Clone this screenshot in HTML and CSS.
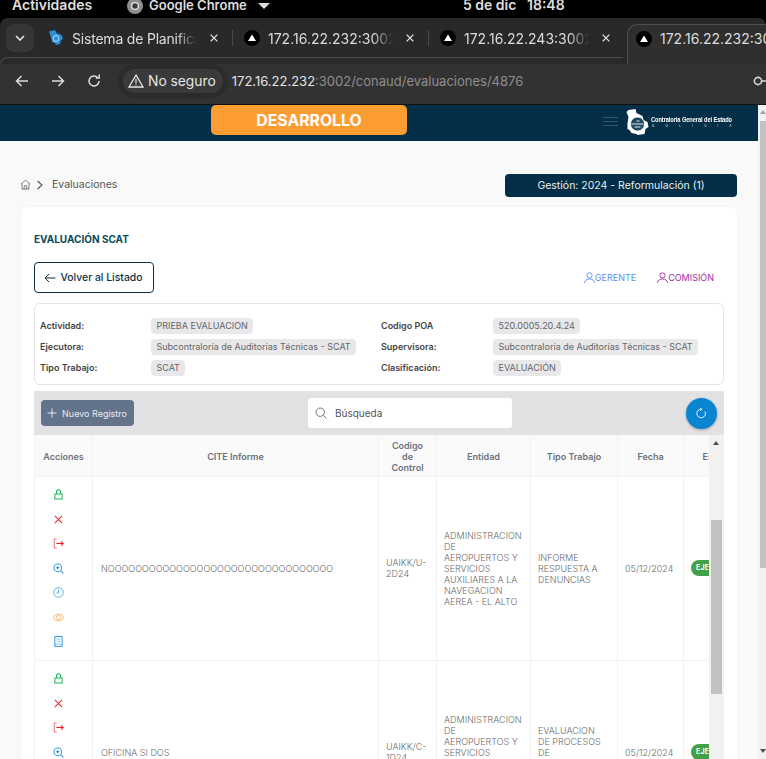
FILE: index.html
```html
<!DOCTYPE html>
<html lang="es">
<head>
    <meta charset="UTF-8">
    <meta name="viewport" content="width=device-width, initial-scale=1.0">
    <title>Evaluaciones</title>
    <link rel="stylesheet" href="styles.css">
</head>
<body>

<svg class="sprites" width="0" height="0">
    <symbol id="i-triangle" viewBox="0 0 16 16"><circle cx="8" cy="8" r="8" fill="#000"/><path d="M8 4.4l4 6.6H4z" fill="#fff"/></symbol>
    <symbol id="i-close" viewBox="0 0 12 12"><path d="M2 2l8 8M10 2l-8 8" stroke="#e6e6e6" stroke-width="1.5" fill="none"/></symbol>
    <symbol id="i-lock" viewBox="0 0 12 12"><path d="M2 5.400h8v5.600H2zM3.800 5.400V3a2.200 2.200 0 0 1 4.400 0v2.400" fill="none" stroke="#22b35e" stroke-width="1.100"/></symbol>
    <symbol id="i-x" viewBox="0 0 12 12"><path d="M2 2l8 8M10 2l-8 8" fill="none" stroke="#e5343b" stroke-width="1.200"/></symbol>
    <symbol id="i-exit" viewBox="0 0 12 12"><path d="M4 1.200H1.400v9.600H4" fill="none" stroke="#f07a7e" stroke-width="1.100"/><path d="M3.600 6h7.600M8.800 3.800L11.200 6 8.800 8.200" fill="none" stroke="#e5202a" stroke-width="1.100"/></symbol>
    <symbol id="i-zoom" viewBox="0 0 12 12"><circle cx="5.200" cy="5.200" r="4.200" fill="none" stroke="#2b9be6" stroke-width="1.100"/><path d="M8.300 8.300L11.400 11.400" stroke="#2b9be6" stroke-width="1.200"/><path d="M3.400 5.200h3.600M5.200 3.400V7" stroke="#1c78bc" stroke-width="1"/></symbol>
    <symbol id="i-clock" viewBox="0 0 12 12"><circle cx="6" cy="6" r="5.200" fill="none" stroke="#4aa8e6" stroke-width="1"/><path d="M6 3v3.400H3.800" fill="none" stroke="#4aa8e6" stroke-width="1"/></symbol>
    <symbol id="i-eye" viewBox="0 0 12 12"><ellipse cx="6" cy="6" rx="5.200" ry="3.800" fill="none" stroke="#fbb566" stroke-width="1"/><circle cx="6" cy="6" r="2.400" fill="none" stroke="#fbb566" stroke-width="1"/></symbol>
    <symbol id="i-book" viewBox="0 0 12 12"><path d="M2 .6h8v10.800H2z" fill="none" stroke="#1c8ad6" stroke-width="1"/><path d="M4 3.400h4M4 5.800h4M2 8.800h8" fill="none" stroke="#5aaae2" stroke-width=".8"/></symbol>
</svg>

<div class="os-bar">
    <span class="os-left">Actividades</span>
    <span class="os-app">
        <svg width="16" height="16" viewBox="0 0 16 16"><circle cx="8" cy="8" r="8" fill="#8f8f8f"/><circle cx="8" cy="8" r="3.400" fill="#3a3a3a" stroke="#e4e4e4" stroke-width="1.400"/></svg>
        Google Chrome
        <i class="os-caret"></i>
    </span>
    <span class="os-clock">5 de dic&nbsp;&nbsp;&nbsp;18:48</span>
</div>

<div class="tab-strip">
    <div class="tab-menu">
        <svg width="10" height="6" viewBox="0 0 10 6"><path d="M1 1l4 4 4-4" fill="none" stroke="#e6e6e6" stroke-width="1.600"/></svg>
    </div>
    <div class="tab">
        <svg class="tab-icon" viewBox="0 0 16 16"><path d="M1 1.500l6-1.500 1.500 3 5 2 1.500 3.500-2 2-1 3.500-4 1-1-2-3-1-1-5z" fill="#2b8fd6"/><circle cx="8" cy="8.500" r="3" fill="none" stroke="#bfe0f5"/></svg>
        <span class="tab-title tab-title-tight">Sistema de Planificación</span>
        <svg class="tab-close" viewBox="0 0 12 12"><use href="#i-close"/></svg>
    </div>
    <div class="tab tab-sep">
        <svg class="tab-icon"><use href="#i-triangle"/></svg>
        <span class="tab-title">172.16.22.232:3002</span>
        <svg class="tab-close" viewBox="0 0 12 12"><use href="#i-close"/></svg>
    </div>
    <div class="tab tab-sep">
        <svg class="tab-icon"><use href="#i-triangle"/></svg>
        <span class="tab-title">172.16.22.243:3002</span>
        <svg class="tab-close" viewBox="0 0 12 12"><use href="#i-close"/></svg>
    </div>
    <div class="tab tab-active">
        <svg class="tab-icon"><use href="#i-triangle"/></svg>
        <span class="tab-title">172.16.22.232:3002</span>
    </div>
</div>

<div class="chrome-bar">
    <svg class="nav-icon" viewBox="0 0 16 16"><path d="M14 8H2.500M7.500 3L2.500 8l5 5" fill="none" stroke="#dcdcdc" stroke-width="1.500"/></svg>
    <svg class="nav-icon" viewBox="0 0 16 16"><path d="M2 8h11.500M8.500 3l5 5-5 5" fill="none" stroke="#dcdcdc" stroke-width="1.500"/></svg>
    <svg class="nav-icon" viewBox="0 0 16 16"><path d="M13 8a5 5 0 1 1-1.600-3.700M13.200 1.600v3.400H9.800" fill="none" stroke="#dcdcdc" stroke-width="1.500"/></svg>
    <div class="omnibox">
        <div class="security">
            <svg width="16" height="14" viewBox="0 0 16 14"><path d="M8 1.200L15 13H1z" fill="none" stroke="#e6e6e6" stroke-width="1.300"/><path d="M8 5v4.400M8 10.400v1.200" stroke="#e6e6e6" stroke-width="1.200"/></svg>
            No seguro
        </div>
        <span class="url">172.16.22.232<span class="url-dim">:3002/conaud/evaluaciones/4876</span></span>
    </div>
    <svg class="key-icon" viewBox="0 0 18 12"><circle cx="5" cy="6" r="3.600" fill="none" stroke="#d6d6d6" stroke-width="1.600"/><path d="M8.600 6H18M14 6v3M17 6v3" fill="none" stroke="#d6d6d6" stroke-width="1.600"/></svg>
</div>

<div class="viewport">
    <div class="page">
        <header class="app-header">
            <div class="env-badge">DESARROLLO</div>
            <div class="hamburger"><i></i><i></i><i></i></div>
            <div class="brand">
                <svg class="brand-mark" viewBox="0 0 24 27"><path d="M3 1l7-1 1 4 6 3 1 4 4 2 1 5-3 2-1 5-7 1-1-1-5-1-2-3-2-1 0-6 1-6-2-5z" fill="#fff"/><circle cx="12" cy="15" r="7" fill="#1d4a60" stroke="#fff" stroke-width=".8"/><path d="M6 15h12M9 18h6M11 12h3" stroke="#dfe8ec"/></svg>
                <div class="brand-text">
                    <span class="brand-name">Contraloria General del Estado</span>
                    <span class="brand-country">BOLIVIA</span>
                </div>
            </div>
        </header>

        <main class="content">
            <div class="crumb-row">
                <div class="crumbs">
                    <svg width="11" height="11" viewBox="0 0 12 12"><path d="M1 5.600L6 1.400l5 4.200M2.200 5v6h7.600V5M4.600 11V7.400h2.800V11" fill="none" stroke="#666" stroke-width=".9"/></svg>
                    <svg width="8" height="10" viewBox="0 0 8 10"><path d="M1.600 1l4.400 4-4.400 4" fill="none" stroke="#555" stroke-width="1.100"/></svg>
                    <span>Evaluaciones</span>
                </div>
                <div class="gestion">Gestión: 2024 - Reformulación (1)</div>
            </div>

            <section class="card">
                <h2 class="card-title">EVALUACIÓN SCAT</h2>

                <div class="actions-row">
                    <button class="btn-back">
                        <svg width="12" height="10" viewBox="0 0 12 10"><path d="M11.500 5H1M5 1L1 5l4 4" fill="none" stroke="#0b3044" stroke-width="1"/></svg>
                        Volver al Listado
                    </button>
                    <div class="roles">
                        <span class="role role-gerente">
                            <svg width="11" height="12" viewBox="0 0 11 12"><circle cx="5.500" cy="3.400" r="2.600" fill="none" stroke="currentColor" stroke-width=".9"/><path d="M.6 11c0-2.600 2-4 4.900-4s4.900 1.400 4.900 4" fill="none" stroke="currentColor" stroke-width=".9"/></svg>GERENTE
                        </span>
                        <span class="role role-comision">
                            <svg width="11" height="12" viewBox="0 0 11 12"><circle cx="5.500" cy="3.400" r="2.600" fill="none" stroke="currentColor" stroke-width=".9"/><path d="M.6 11c0-2.600 2-4 4.900-4s4.900 1.400 4.900 4" fill="none" stroke="currentColor" stroke-width=".9"/></svg>COMISIÓN
                        </span>
                    </div>
                </div>

                <div class="info-box">
                    <span class="info-label">Actividad:</span>
                    <span><span class="chip">PRIEBA EVALUACION</span></span>
                    <span class="info-label">Codigo POA</span>
                    <span><span class="chip">520.0005.20.4.24</span></span>
                    <span class="info-label">Ejecutora:</span>
                    <span><span class="chip">Subcontraloría de Auditorías Técnicas - SCAT</span></span>
                    <span class="info-label">Supervisora:</span>
                    <span><span class="chip">Subcontraloría de Auditorías Técnicas - SCAT</span></span>
                    <span class="info-label">Tipo Trabajo:</span>
                    <span><span class="chip">SCAT</span></span>
                    <span class="info-label">Clasificación:</span>
                    <span><span class="chip">EVALUACIÓN</span></span>
                </div>

                <div class="table-tools">
                    <button class="btn-new">
                        <svg width="10" height="10" viewBox="0 0 10 10"><path d="M5 .5v9M.5 5h9" stroke="#e8ebef" stroke-width="1"/></svg>
                        Nuevo Registro
                    </button>
                    <div class="search">
                        <svg width="12" height="12" viewBox="0 0 12 12"><circle cx="5.200" cy="5.200" r="4.200" fill="none" stroke="#666" stroke-width=".9"/><path d="M8.300 8.300L11.500 11.500" stroke="#666" stroke-width=".9"/></svg>
                        <span>Búsqueda</span>
                    </div>
                    <button class="btn-refresh">
                        <svg width="11" height="11" viewBox="0 0 12 12"><path d="M9.800 3.800A4.700 4.700 0 1 1 6 1.300" fill="none" stroke="#fff" stroke-width="1"/><path d="M4.600 0L6.400 1.300 4.800 3" fill="none" stroke="#fff" stroke-width="1"/></svg>
                    </button>
                </div>

                <div class="table-wrap">
                    <div class="table-clip">
                        <table class="data-table">
                            <colgroup>
                                <col class="col-actions">
                                <col class="col-cite">
                                <col class="col-code">
                                <col class="col-entity">
                                <col class="col-type">
                                <col class="col-date">
                                <col class="col-state">
                            </colgroup>
                            <thead>
                                <tr>
                                    <th>Acciones</th>
                                    <th>CITE Informe</th>
                                    <th>Codigo de Control</th>
                                    <th>Entidad</th>
                                    <th>Tipo Trabajo</th>
                                    <th>Fecha</th>
                                    <th>Estado</th>
                                </tr>
                            </thead>
                            <tbody>
                                <tr>
                                    <td>
                                        <div class="row-actions">
                                            <svg><use href="#i-lock"/></svg>
                                            <svg><use href="#i-x"/></svg>
                                            <svg><use href="#i-exit"/></svg>
                                            <svg><use href="#i-zoom"/></svg>
                                            <svg><use href="#i-clock"/></svg>
                                            <svg><use href="#i-eye"/></svg>
                                            <svg><use href="#i-book"/></svg>
                                        </div>
                                    </td>
                                    <td>NOOOOOOOOOOOOOOOOOOOOOOOOOOOOOOOOO</td>
                                    <td>UAIKK/U-2D24</td>
                                    <td>ADMINISTRACION DE AEROPUERTOS Y SERVICIOS AUXILIARES A LA NAVEGACION AEREA - EL ALTO</td>
                                    <td>INFORME RESPUESTA A DENUNCIAS</td>
                                    <td>05/12/2024</td>
                                    <td><span class="badge">EJECUTADO</span></td>
                                </tr>
                                <tr>
                                    <td>
                                        <div class="row-actions">
                                            <svg><use href="#i-lock"/></svg>
                                            <svg><use href="#i-x"/></svg>
                                            <svg><use href="#i-exit"/></svg>
                                            <svg><use href="#i-zoom"/></svg>
                                            <svg><use href="#i-clock"/></svg>
                                            <svg><use href="#i-eye"/></svg>
                                            <svg><use href="#i-book"/></svg>
                                        </div>
                                    </td>
                                    <td>OFICINA SI DOS</td>
                                    <td>UAIKK/C-1D24</td>
                                    <td>ADMINISTRACION DE AEROPUERTOS Y SERVICIOS AUXILIARES A LA NAVEGACION AEREA - EL ALTO</td>
                                    <td>EVALUACION DE PROCESOS DE CONTRATACION ESTATAL</td>
                                    <td>05/12/2024</td>
                                    <td><span class="badge">EJECUTADO</span></td>
                                </tr>
                            </tbody>
                        </table>
                    </div>
                    <div class="table-scroll">
                        <i class="arrow-up"></i>
                        <div class="table-thumb"></div>
                    </div>
                </div>
            </section>
        </main>
    </div>
    <div class="page-scroll">
        <i class="page-arrow"></i>
        <div class="page-thumb"></div>
        <i class="page-arrow-down"></i>
    </div>
</div>

</body>
</html>
```

FILE: styles.css
```css
* {
    box-sizing: border-box;
}
html, body {
    height: 759px;
    overflow: hidden;
}
body {
    margin: 0;
    font-family: Inter, "Liberation Sans", sans-serif;
    background: #000;
    display: flex;
    flex-direction: column;
}
button {
    font-family: inherit;
}
.sprites {
    position: absolute;
}

/* desktop bar */
.os-bar {
    height: 18px;
    flex: none;
    overflow: hidden;
    background: #000;
    color: #dedede;
    font-size: 14px;
    font-weight: 600;
    line-height: 9px;
    display: flex;
    align-items: flex-start;
    padding-left: 12px;
}
.os-left {
    width: 115px;
}
.os-app {
    display: flex;
    align-items: center;
    gap: 6px;
    width: 336px;
    height: 9px;
    margin-top: 1px;
    font-size: 13px;
}
.os-caret {
    width: 0;
    height: 0;
    border-left: 6.500px solid transparent;
    border-right: 6.500px solid transparent;
    border-top: 6px solid #dedede;
    margin-left: 5px;
}
.os-clock {
    white-space: nowrap;
}

/* browser */
.tab-strip {
    height: 46px;
    flex: none;
    background: #292929;
    border-radius: 8px 8px 0 0;
    display: flex;
    align-items: flex-start;
    padding: 6px 0 0 6px;
    overflow: hidden;
    position: relative;
}
.tab-strip::after {
    content: "";
    position: absolute;
    left: 0;
    top: 39px;
    width: 622px;
    height: 8px;
    border-top: 1px solid #4a4a4a;
    border-left: 1px solid #4a4a4a;
    border-top-left-radius: 8px;
}
.tab-menu {
    width: 28px;
    height: 28px;
    border-radius: 8px;
    background: #363636;
    flex: none;
    display: flex;
    align-items: center;
    justify-content: center;
    margin-right: 6px;
}
.tab {
    width: 196px;
    height: 28px;
    flex: none;
    display: flex;
    align-items: center;
    padding-left: 8px;
    color: #dcdcdc;
    font-size: 14px;
    position: relative;
}
.tab-sep::before {
    content: "";
    position: absolute;
    left: -4px;
    top: 6px;
    height: 16px;
    border-left: 1px solid #4a4a4a;
}
.tab-icon {
    width: 16px;
    height: 16px;
    flex: none;
    margin-right: 8px;
}
.tab-title {
    width: 125px;
    margin-right: 3px;
    white-space: nowrap;
    overflow: hidden;
    -webkit-mask-image: linear-gradient(to right, #000 84%, transparent);
    mask-image: linear-gradient(to right, #000 84%, transparent);
}
.tab-title-tight {
    letter-spacing: -.2px;
}
.tab-close {
    width: 10px;
    height: 10px;
    margin-left: 9px;
}
.tab-active {
    height: 40px;
    width: 160px;
    margin-left: -1px;
    padding-bottom: 12px;
    border: 1px solid #4f4f4f;
    border-bottom: none;
    border-radius: 10px 0 0 0;
    background: #2f2f2f;
    z-index: 1;
}
.tab-active .tab-title {
    width: 120px;
    -webkit-mask-image: none;
    mask-image: none;
}
.chrome-bar {
    height: 41px;
    flex: none;
    background: #323232;
    border-bottom: 1px solid #111;
    display: flex;
    align-items: center;
    padding: 0 0 6px 14px;
    overflow: hidden;
}
.nav-icon {
    width: 16px;
    height: 16px;
    flex: none;
    margin-right: 20px;
}
.omnibox {
    display: flex;
    align-items: center;
    margin-left: -4px;
    font-size: 13px;
    color: #e4e4e4;
    flex: 1;
}
.security {
    display: flex;
    align-items: center;
    gap: 4px;
    height: 24px;
    padding: 0 7px 0 5px;
    margin: 0 9px 0 5px;
    background: #3a3a3a;
    border-radius: 12px;
    box-shadow: 0 0 0 5px #2b2b2b;
    font-size: 13.800px;
    white-space: nowrap;
}
.url {
    white-space: nowrap;
}
.url-dim {
    color: #8e8e8e;
}
.key-icon {
    width: 18px;
    height: 12px;
    flex: none;
    margin-right: -5px;
}

/* page */
.viewport {
    flex: 1;
    min-height: 0;
    display: flex;
    overflow: hidden;
}
.page {
    width: 758px;
    flex: none;
    background: #f9f9f9;
}
.app-header {
    height: 36px;
    background: #022f47;
    display: flex;
    align-items: flex-start;
    padding-left: 211px;
}
.env-badge {
    width: 196px;
    height: 30px;
    background: #fd9d31;
    border-radius: 5px;
    color: #fff;
    font-size: 15.800px;
    font-weight: 700;
    display: flex;
    align-items: center;
    justify-content: center;
}
.hamburger {
    width: 15px;
    margin: 12px 0 0 196px;
    display: flex;
    flex-direction: column;
    gap: 3px;
}
.hamburger i {
    height: 1px;
    background: #2d5a72;
}
.brand {
    display: flex;
    align-items: center;
    margin: 4px 0 0 7px;
}
.brand-mark {
    width: 25px;
    height: 27px;
    flex: none;
}
.brand-text {
    display: flex;
    flex-direction: column;
    color: #fff;
    margin-left: 1px;
}
.brand-name {
    font-family: "Liberation Sans", sans-serif;
    font-size: 7.200px;
    font-weight: 700;
    line-height: 8px;
    white-space: nowrap;
    letter-spacing: -.12px;
    transform: scaleX(.795);
    transform-origin: left center;
}
.brand-country {
    font-size: 3.500px;
    line-height: 5px;
    letter-spacing: 11px;
    color: #cfd8dd;
    margin-left: 1px;
}
.content {
    padding: 33px 21px 0;
}
.crumb-row {
    height: 23px;
    display: flex;
    align-items: center;
    justify-content: space-between;
    margin-bottom: 10px;
}
.crumbs {
    display: flex;
    align-items: center;
    gap: 5px;
    font-size: 10.500px;
    color: #555;
    padding-bottom: 2px;
    margin-left: -1px;
}
.crumbs span {
    margin-left: 3px;
}
.gestion {
    width: 232px;
    height: 23px;
    background: #022f47;
    border-radius: 4px;
    color: #e8edf0;
    font-size: 10.500px;
    display: flex;
    align-items: center;
    justify-content: center;
}
.card {
    background: #fff;
    border-radius: 6px;
    padding: 26px 13px 0;
    box-shadow: 0 0 3px rgba(0, 0, 0, .04);
}
.card-title {
    margin: 0 0 16px;
    font-size: 10px;
    line-height: 13px;
    font-weight: 700;
    color: #0b4a58;
}
.actions-row {
    display: flex;
    justify-content: space-between;
    align-items: center;
    margin-bottom: 10px;
}
.btn-back {
    width: 120px;
    height: 31px;
    display: flex;
    align-items: center;
    justify-content: center;
    gap: 5px;
    background: #fff;
    border: 1px solid #0b3044;
    border-radius: 4px;
    color: #0b3044;
    font-size: 10.400px;
    font-weight: 500;
    padding: 0 2px 0 0;
}
.roles {
    display: flex;
    gap: 21px;
    padding-right: 10px;
}
.role {
    display: flex;
    align-items: center;
    font-size: 9px;
}
.role-gerente {
    color: #5c8ff0;
}
.role-comision {
    color: #a02ca0;
}
.info-box {
    height: 82px;
    border: 1px solid #e4e4e4;
    border-radius: 6px;
    display: grid;
    grid-template-columns: 111px 230px 112px 1fr;
    grid-auto-rows: 21px;
    align-items: center;
    padding: 11px 0 0 5px;
    margin-bottom: 6px;
    font-size: 9px;
}
.info-label {
    font-weight: 600;
    color: #444;
}
.chip {
    display: inline-block;
    height: 16px;
    line-height: 16px;
    padding: 0 5px 0 5.500px;
    background: #e8e8ea;
    border-radius: 4px;
    color: #666;
    white-space: nowrap;
}
.table-tools {
    height: 44px;
    background: #e2e2e4;
    display: grid;
    grid-template-columns: 267px 204px 1fr;
    align-items: center;
    padding: 0 7px;
}
.btn-new {
    width: 93px;
    height: 26px;
    display: flex;
    align-items: center;
    justify-content: center;
    gap: 5px;
    padding: 0 1px 0 0;
    border: none;
    border-radius: 4px;
    background: #637389;
    color: #e8ebef;
    font-size: 9px;
}
.search {
    height: 30px;
    background: #fff;
    border-radius: 3px;
    display: flex;
    align-items: center;
    gap: 8px;
    padding: 0 0 1px 7px;
    font-size: 10px;
    color: #555;
}
.btn-refresh {
    width: 31px;
    height: 31px;
    justify-self: end;
    border: none;
    border-radius: 50%;
    background: #0a85d1;
    padding: 0;
    display: flex;
    align-items: center;
    justify-content: center;
    box-shadow: 0 1px 3px rgba(0, 0, 0, .3);
}
.table-wrap {
    display: flex;
    height: 420px;
}
.table-clip {
    width: 675px;
    flex: none;
    overflow: hidden;
}
.data-table {
    width: 717px;
    table-layout: fixed;
    border-collapse: collapse;
    font-size: 9px;
}
.col-actions { width: 58px; }
.col-cite { width: 286px; }
.col-code { width: 58px; }
.col-entity { width: 94px; }
.col-type { width: 87px; }
.col-date { width: 66px; }
.col-state { width: 68px; }
.data-table th {
    height: 41px;
    padding: 3px 8px 0;
    background: #fafafa;
    border: 1px solid #f2f2f2;
    border-top: none;
    color: #6b7280;
    font-weight: 600;
    line-height: 11px;
    text-align: center;
}
.data-table td {
    padding: 0 8px;
    border: 1px solid #f2f2f2;
    background: #fff;
    color: #6a6a6a;
    font-weight: 300;
    line-height: 11px;
}
.data-table td:nth-child(n+3) {
    padding-left: 7px;
}
.data-table td:nth-child(2) {
    white-space: nowrap;
}
.data-table td:nth-child(3) {
    word-break: break-all;
}
.row-actions {
    height: 183px;
    display: flex;
    flex-direction: column;
    align-items: center;
    justify-content: center;
    gap: 13.500px;
    padding-right: 10px;
}
.row-actions svg {
    width: 11px;
    height: 11px;
    flex: none;
}
.badge {
    display: inline-block;
    height: 16px;
    line-height: 16px;
    padding: 0 7px 0 5px;
    border-radius: 8px;
    background: #43a047;
    color: #fff;
    font-size: 7px;
    font-weight: 700;
    white-space: nowrap;
    letter-spacing: .2px;
}
.table-scroll {
    width: 15px;
    flex: none;
    background: #f1f1f1;
    position: relative;
    padding: 85px 2px 0;
}
.arrow-up {
    position: absolute;
    left: 4px;
    top: 6px;
    width: 0;
    height: 0;
    border-left: 3.500px solid transparent;
    border-right: 3.500px solid transparent;
    border-bottom: 4px solid #505050;
}
.table-thumb {
    height: 174px;
    background: #c1c1c1;
}
.page-scroll {
    width: 8px;
    flex: none;
    background: #f1f1f1;
    position: relative;
    padding: 16px 0 0 2px;
}
.page-arrow, .page-arrow-down {
    position: absolute;
    left: 2px;
    width: 0;
    height: 0;
    border-left: 3.500px solid transparent;
    border-right: 3.500px solid transparent;
}
.page-arrow {
    top: 5px;
    border-bottom: 4px solid #a3a3a3;
}
.page-arrow-down {
    top: 644px;
    border-top: 4px solid #505050;
}
.page-thumb {
    width: 6px;
    height: 447px;
    background: #c1c1c1;
}
```
